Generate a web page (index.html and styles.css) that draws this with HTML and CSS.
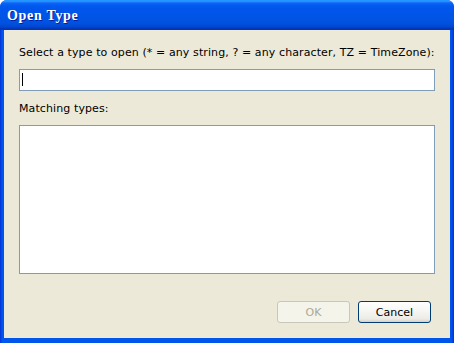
FILE: index.html
```html
<!DOCTYPE html>
<html>
<head>
<meta charset="utf-8">
<link rel="stylesheet" href="styles.css">
</head>
<body>
<div class="window">
  <div class="titlebar"><span class="title">Open Type</span></div>
  <div class="client">
    <div class="label">Select a type to open (* = any string, ? = any character, TZ = TimeZone):</div>
    <div class="input"><span class="caret"></span></div>
    <div class="label label-second">Matching types:</div>
    <div class="list"></div>
    <div class="buttons">
      <button class="btn btn-disabled" disabled>OK</button>
      <button class="btn btn-default">Cancel</button>
    </div>
  </div>
</div>
</body>
</html>
```
FILE: styles.css
```css
html, body {
  margin: 0;
  padding: 0;
  background: #ffffff;
}
.window {
  width: 454px;
  height: 343px;
  box-sizing: border-box;
  display: flex;
  flex-direction: column;
  background: linear-gradient(to right, #0831d9 0px, #0055ea 2px, #0055ea 451px, #0831d9 454px);
  border-radius: 7px 7px 0 0;
  overflow: hidden;
}
.titlebar {
  height: 30px;
  flex: none;
  box-sizing: border-box;
  padding-left: 7px;
  display: flex;
  align-items: center;
  background: linear-gradient(to bottom,
    #0997ff 0px, #3d95ff 1px, #0a66f6 3px, #0058ee 6px,
    #0055ea 12px, #0054e3 20px, #0050dd 24px, #0046cf 27px, #0033b5 29px, #0831d9 30px);
}
.title {
  font-family: "Liberation Serif", "DejaVu Serif", serif;
  font-weight: bold;
  font-size: 14px;
  color: #ffffff;
  text-shadow: 1px 1px 0 #0a1e9c;
  letter-spacing: 0.7px;
  margin-top: 2px;
}
.client {
  flex: 1;
  margin: 0 4px 5px 4px;
  background: #ece9d8;
  padding: 15px 15px 15px 15px;
  display: flex;
  flex-direction: column;
  font-family: "DejaVu Sans", Verdana, sans-serif;
  font-size: 11px;
  letter-spacing: 0.1px;
  color: #000000;
}
.label {
  line-height: 16px;
  height: 16px;
  white-space: nowrap;
}
.label-second {
  margin-top: 10px;
}
.input {
  margin-top: 8px;
  height: 22px;
  box-sizing: border-box;
  border: 1px solid #7f9db9;
  background: #ffffff;
  padding: 3px 2px;
  display: flex;
}
.caret {
  width: 1px;
  height: 13px;
  background: #000000;
}
.list {
  margin-top: 8px;
  height: 149px;
  box-sizing: border-box;
  border: 1px solid #7f9db9;
  background: #ffffff;
}
.buttons {
  margin-top: 27px;
  display: flex;
  justify-content: flex-end;
  gap: 8px;
  padding-right: 4px;
}
.btn {
  width: 73px;
  height: 22px;
  box-sizing: border-box;
  border-radius: 3px;
  font-family: "DejaVu Sans", Verdana, sans-serif;
  font-size: 11px;
  padding: 0;
  margin: 0;
}
.btn-disabled {
  border: 1px solid #c9c7ba;
  background: #f5f4ea;
  color: #aca899;
}
.btn-default {
  border: 1px solid #003c74;
  background: linear-gradient(to bottom, #ffffff 0%, #f7f7f4 40%, #ecebe6 85%, #d6d0c5 100%);
  color: #000000;
}
```
